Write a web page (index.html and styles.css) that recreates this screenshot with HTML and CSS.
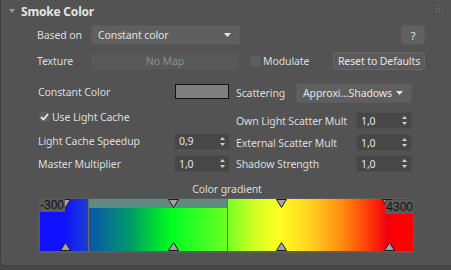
FILE: index.html
```html
<!DOCTYPE html>
<html lang="en">
<head>
  <meta charset="UTF-8">
  <title>Smoke Color</title>
  <link rel="stylesheet" href="styles.css">
</head>
<body>
  <div class="rollout">
    <!-- Rollout header -->
    <div class="rollout-head">
      <span class="caret"></span>
      <span class="title">Smoke Color</span>
      <svg class="grip" width="7" height="7" viewBox="0 0 7 7">
        <g fill="#777">
          <rect x="0" y="0" width="1" height="1"/><rect x="3" y="0" width="1" height="1"/><rect x="6" y="0" width="1" height="1"/>
          <rect x="0" y="3" width="1" height="1"/><rect x="3" y="3" width="1" height="1"/><rect x="6" y="3" width="1" height="1"/>
          <rect x="0" y="6" width="1" height="1"/><rect x="3" y="6" width="1" height="1"/><rect x="6" y="6" width="1" height="1"/>
        </g>
      </svg>
    </div>

    <div class="rollout-body">
      <div class="row row-based">
        <span class="lbl lbl-short">Based on</span>
        <div class="dropdown dd-based">Constant color<svg class="dd-arrow" width="7" height="4"><polygon points="0,0 7,0 3.5,4" fill="#e6e6e6"/></svg></div>
        <button class="btn btn-help">?</button>
      </div>

      <div class="row row-texture">
        <span class="lbl lbl-short">Texture</span>
        <button class="btn btn-map">No Map</button>
        <span class="check check-modulate"><span class="box"></span>Modulate</span>
        <button class="btn btn-reset">Reset to Defaults</button>
      </div>

      <div class="cols">
        <div class="col col-left">
          <div class="field f-l1">
            <span class="lbl">Constant Color</span>
            <span class="swatch"></span>
          </div>
          <div class="field f-l2">
            <span class="check"><span class="box checked"><svg width="9" height="8"><polyline points="1,4 3.5,6.5 8,1" fill="none" stroke="#ececec" stroke-width="1.8"/></svg></span>Use Light Cache</span>
          </div>
          <div class="field f-l3">
            <span class="lbl">Light Cache Speedup</span>
            <span class="spinner">0,9<svg class="spin-arrows" width="5" height="9"><polygon points="2.5,0 5,3 0,3" fill="#cfcfcf"/><polygon points="0,6 5,6 2.5,9" fill="#cfcfcf"/></svg></span>
          </div>
          <div class="field f-l4">
            <span class="lbl">Master Multiplier</span>
            <span class="spinner">1,0<svg class="spin-arrows" width="5" height="9"><polygon points="2.5,0 5,3 0,3" fill="#cfcfcf"/><polygon points="0,6 5,6 2.5,9" fill="#cfcfcf"/></svg></span>
          </div>
        </div>

        <div class="col col-right">
          <div class="field f-r1">
            <span class="lbl">Scattering</span>
            <div class="dropdown dd-scatter">Approxi...Shadows<svg class="dd-arrow" width="7" height="4"><polygon points="0,0 7,0 3.5,4" fill="#e6e6e6"/></svg></div>
          </div>
          <div class="field f-r2">
            <span class="lbl">Own Light Scatter Mult</span>
            <span class="spinner">1,0<svg class="spin-arrows" width="5" height="9"><polygon points="2.5,0 5,3 0,3" fill="#cfcfcf"/><polygon points="0,6 5,6 2.5,9" fill="#cfcfcf"/></svg></span>
          </div>
          <div class="field f-r3">
            <span class="lbl">External Scatter Mult</span>
            <span class="spinner">1,0<svg class="spin-arrows" width="5" height="9"><polygon points="2.5,0 5,3 0,3" fill="#cfcfcf"/><polygon points="0,6 5,6 2.5,9" fill="#cfcfcf"/></svg></span>
          </div>
          <div class="field f-r4">
            <span class="lbl">Shadow Strength</span>
            <span class="spinner">1,0<svg class="spin-arrows" width="5" height="9"><polygon points="2.5,0 5,3 0,3" fill="#cfcfcf"/><polygon points="0,6 5,6 2.5,9" fill="#cfcfcf"/></svg></span>
          </div>
        </div>
      </div>

      <div class="grad-title">Color gradient</div>

      <div class="gradient">
        <div class="grad-fill">
          <div class="seg seg-a"></div>
          <div class="seg seg-b"><div class="seg-sel"></div></div>
          <div class="seg seg-c"></div>
        </div>

        <!-- keys -->
        <svg class="key key-top" style="left:20px" width="11" height="9"><polygon points="0.5,0.5 10.5,0.5 5.5,8.5" fill="#a4a4a4" stroke="#1c1c1c"/></svg>
        <svg class="key key-top" style="left:128px" width="11" height="9"><polygon points="0.5,0.5 10.5,0.5 5.5,8.5" fill="#a4a4a4" stroke="#1c1c1c"/></svg>
        <svg class="key key-top" style="left:236px" width="11" height="9"><polygon points="0.5,0.5 10.5,0.5 5.5,8.5" fill="#a4a4a4" stroke="#1c1c1c"/></svg>
        <svg class="key key-top" style="left:342px" width="11" height="9"><polygon points="0.5,0.5 10.5,0.5 5.5,8.5" fill="#a4a4a4" stroke="#1c1c1c"/></svg>

        <svg class="key key-bot" style="left:20px" width="11" height="9"><polygon points="5.5,0.5 10.5,8.5 0.5,8.5" fill="#a4a4a4" stroke="#1c1c1c"/></svg>
        <svg class="key key-bot" style="left:128px" width="11" height="9"><polygon points="5.5,0.5 10.5,8.5 0.5,8.5" fill="#a4a4a4" stroke="#1c1c1c"/></svg>
        <svg class="key key-bot" style="left:236px" width="11" height="9"><polygon points="5.5,0.5 10.5,8.5 0.5,8.5" fill="#a4a4a4" stroke="#1c1c1c"/></svg>
        <svg class="key key-bot" style="left:344px" width="11" height="9"><polygon points="5.5,0.5 10.5,8.5 0.5,8.5" fill="#a4a4a4" stroke="#1c1c1c"/></svg>

        <span class="range range-min">-300</span>
        <span class="range range-max">4300</span>
      </div>
    </div>
  </div>
</body>
</html>
```

FILE: styles.css
```css
html, body {
  margin: 0;
  padding: 0;
  background: #474747;
  width: 451px;
  height: 270px;
  overflow: hidden;
  font-family: "Noto Sans", "Open Sans", sans-serif;
  font-size: 10.5px;
  letter-spacing: -0.1px;
  color: #dcdcdc;
}

/* Rollout panel */
.rollout {
  height: 266px;
  background: #535353;
  border-left: 1px solid #414141;
  border-bottom: 1px solid #414141;
  border-bottom-left-radius: 4px;
  box-sizing: border-box;
}
.rollout-head {
  height: 22px;
  display: flex;
  align-items: center;
  padding-left: 8px;
  padding-right: 8px;
}
.caret {
  width: 0;
  height: 0;
  border-left: 3px solid transparent;
  border-right: 3px solid transparent;
  border-top: 4px solid #9a9a9a;
  margin-right: 6px;
  margin-top: -1px;
}
.title {
  font-weight: bold;
  font-size: 12px;
  color: #e4e4e4;
  letter-spacing: -0.2px;
}
.grip {
  margin-left: auto;
  margin-top: -6px;
}

.rollout-body {
  padding-top: 3px;
}

/* Generic rows */
.row {
  display: flex;
  align-items: center;
  padding-left: 36px;
  padding-right: 26px;
}
.row-based {
  height: 20px;
}
.row-texture {
  height: 18px;
  margin-top: 7px;
}
.lbl {
  white-space: nowrap;
}
.lbl-short {
  width: 54px;
}

/* Dropdowns */
.dropdown {
  height: 20px;
  box-sizing: border-box;
  background: #5f5f5f;
  border: 1px solid #5a5a5a;
  border-radius: 2px;
  display: flex;
  align-items: center;
  padding-left: 6px;
  padding-right: 8px;
  color: #e2e2e2;
  white-space: nowrap;
}
.dd-arrow {
  margin-left: auto;
  display: block;
}
.dd-based {
  width: 149px;
}
.dd-scatter {
  width: 116px;
}

/* Buttons */
.btn {
  font-family: inherit;
  font-size: 10.5px;
  letter-spacing: -0.1px;
  box-sizing: border-box;
  border-radius: 3px;
  padding: 0;
  margin: 0;
  color: #e4e4e4;
  background: #5e5e5e;
  border: 1px solid #585858;
}
.btn-help {
  margin-left: auto;
  width: 24px;
  height: 20px;
  background: #616161;
  border-color: #5c5c5c;
  font-size: 11px;
}
.btn-map {
  width: 148px;
  height: 18px;
  background: #585858;
  border-color: #555;
  color: #8c8c8c;
}
.btn-reset {
  margin-left: auto;
  width: 92px;
  height: 18px;
  border-color: #666;
  background: #5b5b5b;
}

/* Checkboxes */
.check {
  display: flex;
  align-items: center;
  white-space: nowrap;
}
.check-modulate {
  margin-left: 11px;
}
.box {
  width: 11px;
  height: 11px;
  box-sizing: border-box;
  background: #5e5e5e;
  border: 1px solid #595959;
  margin-right: 2px;
  display: flex;
  align-items: center;
  justify-content: center;
}
.check-modulate .box {
  margin-top: 1px;
}

/* Two column area */
.cols {
  display: flex;
  margin-top: 13px;
  padding-left: 37px;
}
.col {
  display: flex;
  flex-direction: column;
}
.col-left {
  width: 192px;
}
.col-right {
  width: 176px;
  margin-left: 6px;
}
.field {
  display: flex;
  align-items: center;
  justify-content: space-between;
}
.f-l1 { height: 17px; }
.f-l2 { height: 17px; margin-top: 8px; }
.f-l3 { height: 18px; margin-top: 7px; }
.f-l4 { height: 17px; margin-top: 5px; }
.f-r1 { height: 20px; }
.f-r2 { height: 17px; margin-top: 9px; }
.f-r3 { height: 17px; margin-top: 5px; }
.f-r4 { height: 17px; margin-top: 4px; }

.f-l2 .check {
  margin-left: 1px;
}

.swatch {
  width: 54px;
  height: 15px;
  box-sizing: border-box;
  background: #7f7f7f;
  border: 1px solid #111;
  margin-right: 1px;
}

/* Spinners */
.spinner {
  width: 56px;
  height: 17px;
  box-sizing: border-box;
  background: #474747;
  border: 1px solid #4f4f4f;
  display: flex;
  align-items: center;
  padding-left: 4px;
  padding-right: 4px;
  color: #e2e2e2;
}
.spin-arrows {
  margin-left: auto;
  display: block;
}

/* Gradient */
.grad-title {
  text-align: center;
  margin-top: 10px;
  height: 15px;
  line-height: 15px;
  padding-left: 2px;
}
.gradient {
  position: relative;
  margin-left: 38px;
  margin-top: 1px;
  width: 375px;
  height: 55px;
  box-sizing: border-box;
  border: 1px solid #5c5c5c;
  border-bottom-width: 2px;
  background: #5c5c5c;
}
.grad-fill {
  display: flex;
  height: 100%;
}
.seg {
  height: 100%;
  box-sizing: border-box;
  position: relative;
}
.seg-a {
  width: 48px;
  background: linear-gradient(to right, #1010ff 0%, #1010ff 50%, #1a3fd2 100%);
}
.seg-b {
  width: 139px;
  border-left: 1px solid #6c6c6c;
  background: linear-gradient(to right, #0a55aa 0%, #009a6a 30%, #00e030 50%, #00ff22 60%, #6cff22 100%);
}
.seg-sel {
  height: 9px;
  background: #5f8b82;
}
.seg-c {
  flex: 1;
  border-left: 1px solid #6c6c6c;
  background: linear-gradient(to right, #78ff22 0%, #d8ff22 16%, #ffff22 28%, #ffd020 45%, #ff8a10 62%, #ff3a08 76%, #f00010 86%, #ff0000 92%, #ff0000 100%);
}
.key {
  position: absolute;
  display: block;
}
.key-top {
  top: 0;
}
.key-bot {
  bottom: 0;
}
.range {
  position: absolute;
  background: #5a5a5a;
  color: #141414;
  font-family: "Liberation Sans", sans-serif;
  font-size: 12px;
  letter-spacing: 0;
  line-height: 14px;
  height: 14px;
  padding: 0 1px;
}
.range-min {
  left: -1px;
  top: -1px;
}
.range-max {
  right: -1px;
  top: 1px;
}
```
